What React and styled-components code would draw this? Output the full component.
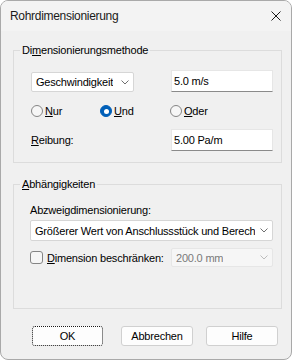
import React from 'react';
import styled, { createGlobalStyle } from 'styled-components';

const GlobalStyle = createGlobalStyle`
  html, body {
    margin: 0;
    padding: 0;
    background: #ffffff;
  }
  body {
    font-family: "Liberation Sans", Arial, sans-serif;
    font-size: 11px;
    letter-spacing: -0.2px;
    color: #000;
  }
  * {
    box-sizing: border-box;
  }
`;

const Window = styled.div`
  width: 292px;
  height: 360px;
  border: 1px solid #a9a9a9;
  border-radius: 8px;
  background: #f0f0f0;
  overflow: hidden;
  display: flex;
  flex-direction: column;
`;

const TitleBar = styled.div`
  height: 30px;
  flex: none;
  background: #f3f3f3;
  display: flex;
  align-items: center;
  justify-content: space-between;
  padding-left: 9px;
`;

const Title = styled.span`
  font-size: 12px;
  letter-spacing: -0.3px;
  color: #1a1a1a;
`;

const CloseButton = styled.div`
  width: 30px;
  height: 30px;
  display: flex;
  align-items: center;
  justify-content: center;
`;

const Body = styled.div`
  display: flex;
  flex-direction: column;
  padding: 12px 9px 0 12px;
`;

const Group = styled.fieldset`
  margin: ${p => p.$mt || 0}px 0 0 0;
  padding: 0;
  border: 1px solid #dcdcdc;
  min-width: 0;
`;

const Legend = styled.legend`
  margin-left: 6px;
  padding: 0 2px;
  line-height: 14px;
`;

const GroupInner = styled.div`
  padding: ${p => p.$pad};
  display: flex;
  flex-direction: column;
`;

const Row = styled.div`
  display: flex;
  justify-content: space-between;
  align-items: ${p => p.$align || 'center'};
  height: ${p => p.$h}px;
  margin-top: ${p => p.$mt || 0}px;
`;

const RadioRow = styled.div`
  display: grid;
  grid-template-columns: 69px 70px auto;
  height: 16px;
  margin-top: 11px;
  align-items: center;
`;

const RadioLabel = styled.label`
  display: flex;
  align-items: center;
  gap: 2px;
`;

const RadioDot = styled.span`
  width: 12px;
  height: 12px;
  border-radius: 50%;
  flex: none;
  display: flex;
  align-items: center;
  justify-content: center;
  background: ${p => (p.$checked ? '#005fb8' : '#f6f6f6')};
  border: 1px solid ${p => (p.$checked ? '#005fb8' : '#858585')};

  &::after {
    content: '';
    display: ${p => (p.$checked ? 'block' : 'none')};
    width: 5px;
    height: 5px;
    border-radius: 50%;
    background: #fff;
  }
`;

const CheckBox = styled.span`
  width: 13px;
  height: 13px;
  flex: none;
  border: 1px solid #858585;
  border-radius: 3px;
  background: #f6f6f6;
`;

const CheckLabel = styled.label`
  display: flex;
  align-items: center;
  gap: 4px;
`;

const Combo = styled.div`
  width: ${p => (p.$w ? `${p.$w}px` : '100%')};
  height: ${p => p.$h}px;
  background: ${p => (p.$disabled ? '#f6f6f6' : '#ffffff')};
  border: 1px solid ${p => (p.$disabled ? '#e6e6e6' : '#d6d6d6')};
  border-radius: 2px;
  display: flex;
  align-items: center;
  justify-content: space-between;
  gap: 4px;
  padding: 0 4px 0 4px;
  color: ${p => (p.$disabled ? '#7a7a7a' : '#000')};
  white-space: nowrap;
  overflow: hidden;
`;

const ComboText = styled.span`
  overflow: hidden;
`;

const Edit = styled.div`
  width: 102px;
  height: 22px;
  background: #ffffff;
  border: 1px solid #e6e6e6;
  border-bottom: 1px solid #8a8a8a;
  padding: 3px 0 0 2px;
  line-height: 14px;
`;

const Label = styled.span`
  line-height: 14px;
`;

const ButtonRow = styled.div`
  display: flex;
  margin-top: 17px;
  padding-left: 19px;
`;

const Button = styled.div`
  width: ${p => p.$w}px;
  height: 20px;
  margin-left: ${p => p.$ml || 0}px;
  background: #fdfdfd;
  border: 1px ${p => (p.$focus ? 'dotted #1a1a1a' : 'solid #d0d0d0')};
  border-radius: 3px;
  display: flex;
  align-items: center;
  justify-content: center;
`;

const Chevron = ({ color = '#5f5f5f' }) => (
  <svg width="8" height="5" viewBox="0 0 8 5" style={{ flex: 'none' }}>
    <path d="M0.5 0.5 L4 4 L7.5 0.5" fill="none" stroke={color} strokeWidth="0.9" />
  </svg>
);

const CloseIcon = () => (
  <svg width="10" height="10" viewBox="0 0 10 10">
    <path d="M0.5 0.5 L9.5 9.5 M9.5 0.5 L0.5 9.5" stroke="#1a1a1a" strokeWidth="1" />
  </svg>
);

const App = () => {
  return (
    <>
      <GlobalStyle />
      <Window>
        <TitleBar>
          <Title>Rohrdimensionierung</Title>
          <CloseButton>
            <CloseIcon />
          </CloseButton>
        </TitleBar>

        <Body>
          <Group>
            <Legend>Di<u>m</u>ensionierungsmethode</Legend>
            <GroupInner $pad="13px 8px 11px 17px">
              <Row $h={22} $align="flex-end">
                <Combo $w={103} $h={20}>
                  <ComboText>Geschwindigkeit</ComboText>
                  <Chevron />
                </Combo>
                <Edit>5.0 m/s</Edit>
              </Row>

              <RadioRow>
                <RadioLabel>
                  <RadioDot />
                  <span><u>N</u>ur</span>
                </RadioLabel>
                <RadioLabel>
                  <RadioDot $checked />
                  <span><u>U</u>nd</span>
                </RadioLabel>
                <RadioLabel>
                  <RadioDot />
                  <span><u>O</u>der</span>
                </RadioLabel>
              </RadioRow>

              <Row $h={22} $mt={10}>
                <Label><u>R</u>eibung:</Label>
                <Edit>5.00 Pa/m</Edit>
              </Row>
            </GroupInner>
          </Group>

          <Group $mt={14}>
            <Legend><u>A</u>bhängigkeiten</Legend>
            <GroupInner $pad="12px 8px 41px 16px">
              <Label>Abzweigdimensionierung:</Label>
              <Row $h={21} $mt={3}>
                <Combo $h={21}>
                  <ComboText>Größerer Wert von Anschlussstück und Berech</ComboText>
                  <Chevron />
                </Combo>
              </Row>
              <Row $h={19} $mt={7}>
                <CheckLabel>
                  <CheckBox />
                  <span><u>D</u>imension beschränken:</span>
                </CheckLabel>
                <Combo $w={102} $h={19} $disabled>
                  <ComboText>200.0 mm</ComboText>
                  <Chevron color="#b5b5b5" />
                </Combo>
              </Row>
            </GroupInner>
          </Group>

          <ButtonRow>
            <Button $w={71} $focus>OK</Button>
            <Button $w={72} $ml={18}>Abbrechen</Button>
            <Button $w={72} $ml={13}>Hilfe</Button>
          </ButtonRow>
        </Body>
      </Window>
    </>
  );
};

export default App;
